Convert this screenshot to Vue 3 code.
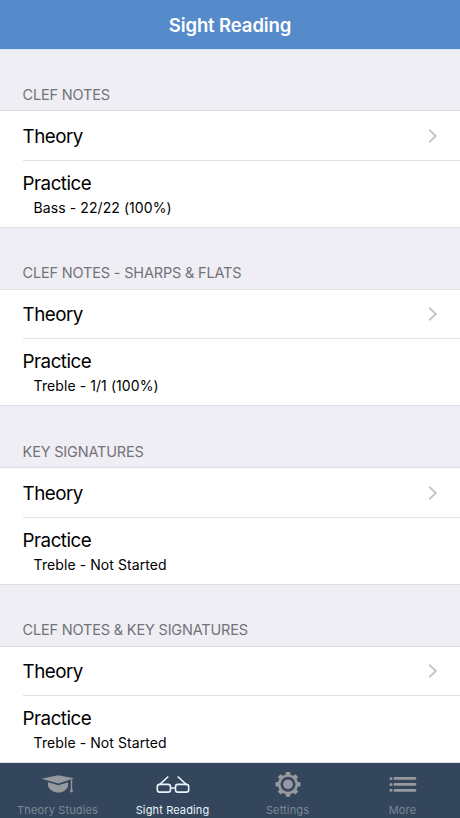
<script setup>
const sections = [
  { title: 'CLEF NOTES', progress: 'Bass - 22/22 (100%)' },
  { title: 'CLEF NOTES - SHARPS & FLATS', progress: 'Treble - 1/1 (100%)' },
  { title: 'KEY SIGNATURES', progress: 'Treble - Not Started' },
  { title: 'CLEF NOTES & KEY SIGNATURES', progress: 'Treble - Not Started' },
]
const teeth = [0, 45, 90, 135, 180, 225, 270, 315]
</script>

<template>
  <div class="screen">
    <header class="navbar"><h1>Sight Reading</h1></header>

    <main class="content">
      <section v-for="s in sections" :key="s.title" class="group">
        <h2><span>{{ s.title }}</span></h2>
        <div class="rows">
          <div class="row theory">
            <span class="label">Theory</span>
            <svg class="chevron" width="10" height="16" viewBox="0 0 10 16">
              <path d="M1.200 1.800 7.800 8 1.200 14.200" fill="none" stroke="#c5c5c9" stroke-width="1.900" />
            </svg>
          </div>
          <div class="row practice">
            <span class="label">Practice</span>
            <span class="detail">{{ s.progress }}</span>
          </div>
        </div>
      </section>
    </main>

    <nav class="tabbar">
      <div class="tab">
        <svg width="36" height="28" viewBox="0 0 36 28">
          <path d="M1.500 8.700 18 5.300l16 3L18.500 13.500z" />
          <path d="M8 12.200 18.500 15.200 28 12.200v3.800c-1 4-5 6.500-9.500 6.500s-9-2.500-10.500-6.500z" />
          <path d="M30.800 9.500h1.400V18.500l.8 3.800h-3l.8-3.800z" />
        </svg>
        <span>Theory Studies</span>
      </div>
      <div class="tab active">
        <svg class="outline" width="36" height="28" viewBox="0 0 36 28">
          <rect x="2.300" y="14.400" width="13.200" height="7.700" rx="2.400" />
          <rect x="20.500" y="14.400" width="13.200" height="7.700" rx="2.400" />
          <path d="M15.500 18h5M4.300 14.800l9-8.300M31.700 14.800l-9-8.300" />
        </svg>
        <span>Sight Reading</span>
      </div>
      <div class="tab">
        <svg width="36" height="28" viewBox="0 0 36 28">
          <g transform="translate(18 14.300)">
            <circle r="8.800" fill="none" stroke="currentColor" stroke-width="2.600" />
            <rect v-for="a in teeth" :key="a" x="-2.200" y="-12.400" width="4.400" height="4" rx=".6" :transform="`rotate(${a})`" />
            <circle r="4.900" />
          </g>
        </svg>
        <span>Settings</span>
      </div>
      <div class="tab">
        <svg width="36" height="28" viewBox="0 0 36 28">
          <g v-for="y in [8.4, 14.4, 20.3]" :key="y">
            <circle cx="6" :cy="y" r="1.500" />
            <rect x="8.600" :y="y - 1.4" width="22.700" height="2.800" rx="1.200" />
          </g>
        </svg>
        <span>More</span>
      </div>
    </nav>
  </div>
</template>

<style>
body {
  margin: 0;
}
</style>

<style scoped>
.screen {
  display: flex;
  flex-direction: column;
  width: 460px;
  height: 818px;
  overflow: hidden;
  background: #efeef4;
  color: #000;
  font-family: Inter, "Liberation Sans", sans-serif;
}
.navbar {
  flex: none;
  display: flex;
  align-items: center;
  justify-content: center;
  height: 49px;
  background: #568bcb;
  border-bottom: 1px solid #d5e8f8;
}
h1 {
  margin: 0;
  color: #fff;
  font-size: 18.500px;
  font-weight: 600;
  line-height: 24px;
  letter-spacing: -0.1px;
}
.content {
  flex: 1;
  min-height: 0;
  overflow: hidden;
}
.group {
  height: 178.500px;
}
h2 {
  display: flex;
  align-items: flex-end;
  box-sizing: border-box;
  height: 60.400px;
  margin: 0;
  padding: 0 22.600px 6.600px;
  color: #737278;
  font-size: 14.500px;
  font-weight: 400;
  line-height: 18px;
  letter-spacing: -0.18px;
}
.rows {
  box-sizing: border-box;
  height: 117.600px;
  background: #fff;
  border-top: 1px solid #dfdfe3;
  border-bottom: 1px solid #dfdfe3;
}
.row {
  display: flex;
  box-sizing: border-box;
  margin-left: 22.600px;
}
.theory {
  align-items: center;
  justify-content: space-between;
  height: 49.600px;
  padding-right: 22px;
  border-bottom: 1px solid #e2e2e5;
}
.theory .label {
  padding-top: 2px;
}
.practice {
  flex-direction: column;
  padding-top: 10.900px;
}
.label {
  font-size: 18.800px;
  line-height: 24px;
  letter-spacing: -0.52px;
}
.detail {
  padding-left: 11px;
  font-size: 14px;
  line-height: 24px;
  letter-spacing: 0.08px;
}
.tabbar {
  flex: none;
  display: flex;
  height: 55px;
  background: #34465c;
}
.tab {
  flex: 1;
  display: flex;
  flex-direction: column;
  align-items: center;
  padding-top: 7px;
  color: #96999e;
  fill: currentColor;
}
.tab span {
  margin-top: 5px;
  color: #7d8793;
  font-size: 11px;
  line-height: 14px;
  letter-spacing: 0.14px;
}
.tab.active,
.tab.active span {
  color: #e9f3fb;
}
.outline {
  fill: none;
  stroke: currentColor;
  stroke-width: 1.600;
}
</style>
